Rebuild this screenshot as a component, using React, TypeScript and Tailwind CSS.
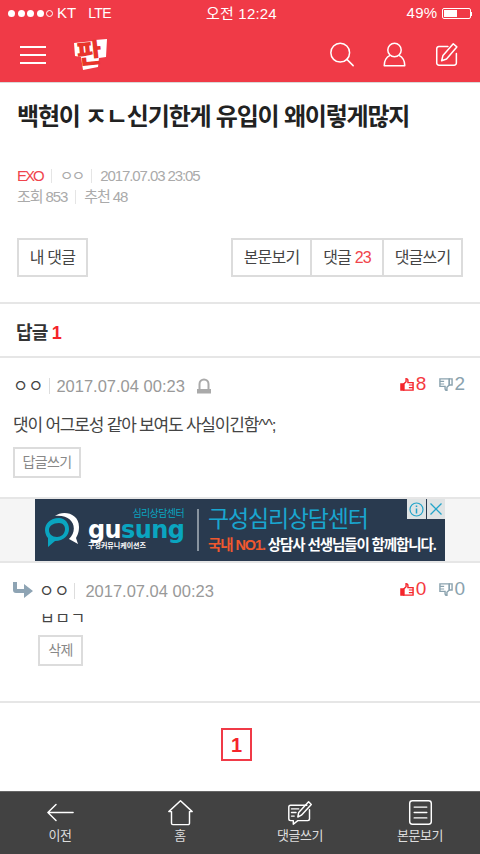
const font = "font-['Liberation_Sans','Noto_Sans_CJK_KR',sans-serif]";

function ThumbUp() {
  return (
    <svg width="14" height="15" viewBox="0 0 15 15" fill="none" stroke="#f5252b" strokeWidth="1.500">
      <path d="M1 7h3v6.500H1z" fill="#f5252b" />
      <path d="M4 7l2.500-2.500V1.200c1.400 0 2 .8 2 2V5.500H14V13.500H4z" />
      <path d="M9.500 8h4.500M9.500 10.800h4.500" strokeWidth="1.200" />
    </svg>
  );
}

function ThumbDown() {
  return (
    <svg width="14" height="15" viewBox="0 0 15 15" fill="none" stroke="#8aa2ae" strokeWidth="1.500">
      <path d="M14 8h-3V1.500h3z" />
      <path d="M11 8l-2.500 2.500v3.300c-1.400 0-2-.8-2-2V9.500H1V1.500h10z" />
      <path d="M5.500 7H1M5.500 4.200H1" strokeWidth="1.200" />
    </svg>
  );
}

function Votes({ up, down }: { up: number; down: number }) {
  return (
    <div className="flex items-center text-[19px] leading-[20px]">
      <ThumbUp />
      <span className="ml-[2px] text-[#f5393f]">{up}</span>
      <span className="ml-[13px]"><ThumbDown /></span>
      <span className="ml-[1px] text-[#8aa2ae]">{down}</span>
    </div>
  );
}

function Logo() {
  return (
    <div className="relative ml-[28px] h-[32px] w-[34px]">
      <svg width="34" height="32" viewBox="0 0 34 32" className="absolute inset-0">
        <path d="M0 4l20-2 1-1 12-1-1 18-7 1-1 9-15 3-2-13-6-1z" fill="#fff" />
      </svg>
      <span className="absolute left-[3px] top-[-1px] text-[27px] font-black leading-[32px] text-[#e8342a] rotate-[-6deg]">판</span>
    </div>
  );
}

function TabIcon({ children }: { children: React.ReactNode }) {
  return (
    <svg width="27" height="27" viewBox="0 0 30 30" fill="none" stroke="#fff" strokeWidth="1.600" strokeLinecap="round" strokeLinejoin="round">
      {children}
    </svg>
  );
}

const tabs = [
  { label: "이전", icon: <path d="M1 15h28M1 15l9-9M1 15l9 9" /> },
  { label: "홈", icon: <path d="M2 14L15 2l13 12h-3v13a1.500 1.500 0 0 1-1.500 1.500h-17A1.500 1.500 0 0 1 5 27V14z" /> },
  {
    label: "댓글쓰기",
    icon: (
      <>
        <path d="M22 7H4a2 2 0 0 0-2 2v13a2 2 0 0 0 2 2h3v4l5-4h11a2 2 0 0 0 2-2V12" />
        <path d="M5 11h8M5 15h5M5 19h3" />
        <path d="M12 20l1-5L24 3l3 3-11 12z" />
      </>
    ),
  },
  {
    label: "본문보기",
    icon: (
      <>
        <rect x="3" y="2" width="24" height="26" rx="3" />
        <path d="M8 9h14M8 15h14M8 21h14" />
      </>
    ),
  },
];

export default function App() {
  return (
    <div className={`${font} flex h-[854px] w-[480px] flex-col overflow-hidden bg-white`}>
      {/* Status bar + header */}
      <div className="h-[83px] shrink-0 border-b border-[#d9d9d9] bg-[#f03a47] text-white">
        <div className="relative flex h-[27px] items-center px-[8px] text-[15px]">
          <div className="flex items-center gap-[2.500px]">
            {[0, 1, 2, 3].map((i) => (
              <span key={i} className="h-[7px] w-[7px] rounded-full bg-white" />
            ))}
            <span className="h-[7px] w-[7px] rounded-full border border-white" />
          </div>
          <span className="ml-[4px]">KT</span>
          <span className="ml-[12px] text-[14px] tracking-[-0.600px]">LTE</span>
          <span className="absolute left-[206px] top-[3px] text-[15px] tracking-[0.200px]">오전 12:24</span>
          <div className="ml-auto flex items-center">
            <span className="tracking-[0.300px]">49%</span>
            <div className="ml-[4px] flex h-[11px] w-[29px] items-center rounded-[2px] border border-white p-[1px]">
              <div className="h-full w-[13px] bg-white" />
            </div>
            <div className="h-[4px] w-[1.500px] bg-white" />
          </div>
        </div>
        <div className="flex h-[55px] items-center pl-[20px] pr-[20px]">
          <div className="flex w-[26px] flex-col gap-[6px]">
            <span className="h-[2px] bg-white" />
            <span className="h-[2px] bg-white" />
            <span className="h-[2px] bg-white" />
          </div>
          <Logo />
          <div className="ml-auto flex items-center gap-[27px]">
            <svg width="26" height="25" viewBox="0 0 28 28" fill="none" stroke="#fff" strokeWidth="1.700" strokeLinecap="round">
              <circle cx="12" cy="12" r="10.500" />
              <path d="M19.500 19.500l7 7" />
            </svg>
            <svg width="25" height="25" viewBox="0 0 26 28" fill="none" stroke="#fff" strokeWidth="1.700" strokeLinejoin="round">
              <circle cx="13" cy="9" r="7.500" />
              <path d="M8 15C4 17 1.500 20.500 1.500 26.500h23c0-6-2.500-9.500-6.500-11.500" />
            </svg>
            <svg width="26" height="25" viewBox="0 0 26 28" fill="none" stroke="#fff" strokeWidth="1.700" strokeLinejoin="round" strokeLinecap="round">
              <path d="M14 5H4a2.500 2.500 0 0 0-2.500 2.500v16A2.500 2.500 0 0 0 4 26h17a2.500 2.500 0 0 0 2.500-2.500V13" />
              <path d="M7 21l1.500-6L20 2l4 3.500L12.500 19z" />
            </svg>
          </div>
        </div>
      </div>

      {/* Title */}
      <h1 className="mt-[18px] whitespace-nowrap pl-[17px] text-[24px] font-bold leading-[32px] tracking-[-1.200px] text-[#222]">
        백현이 ㅈㄴ신기한게 유입이 왜이렇게많지
      </h1>

      {/* Meta */}
      <div className="mt-[32px] pl-[17px] text-[15px] leading-[21px] tracking-[-1.100px] text-[#aaa]">
        <div className="flex items-center">
          <span className="tracking-[-2px] text-[#f0444c]">EXO</span>
          <span className="mx-[8px] h-[14px] w-px bg-[#e5e5e5]" />
          <span className="tracking-[-2px]">ㅇㅇ</span>
          <span className="ml-[8px] mr-[8px] h-[14px] w-px bg-[#e5e5e5]" />
          <span>2017.07.03 23:05</span>
        </div>
        <div className="flex items-center">
          <span>조회 853</span>
          <span className="mx-[8px] h-[14px] w-px bg-[#e5e5e5]" />
          <span>추천 48</span>
        </div>
      </div>

      {/* Buttons */}
      <div className="mt-[31px] flex justify-between px-[17px] text-[16px] tracking-[-0.800px] text-[#444]">
        <div className="flex h-[39px] w-[71px] items-center justify-center border-2 border-[#dcdcdc]">내 댓글</div>
        <div className="flex h-[39px] border-2 border-[#dcdcdc]">
          <div className="flex w-[79px] items-center justify-center border-r-2 border-[#dcdcdc]">본문보기</div>
          <div className="flex w-[72px] items-center justify-center border-r-2 border-[#dcdcdc]">
            댓글&nbsp;<span className="text-[#f0444c]">23</span>
          </div>
          <div className="flex w-[77px] items-center justify-center">댓글쓰기</div>
        </div>
      </div>

      <div className="mt-[25px] h-[2px] bg-[#e6e6e6]" />

      {/* Reply heading */}
      <div className="flex h-[52px] items-center pl-[16px] pt-[7px] text-[18px] font-bold tracking-[-0.800px] text-[#333]">
        답글&nbsp;<span className="text-[#f5252b]">1</span>
      </div>
      <div className="h-[2px] bg-[#e6e6e6]" />

      {/* Comment */}
      <div className="pl-[13px] pr-[14px] pt-[18px]">
        <div className="flex items-start justify-between">
          <div className="flex items-center text-[16.500px] leading-[20px] text-[#999]">
            <span className="text-[#444]">ㅇㅇ</span>
            <span className="mx-[6px] h-[16px] w-px bg-[#ddd]" />
            <span>2017.07.04 00:23</span>
            <svg className="ml-[12px]" width="14" height="16" viewBox="0 0 14 16" fill="#aaa">
              <path fillRule="evenodd" d="M1.500 11V6a5.500 5.500 0 0 1 11 0v5h1.500v4.500H0V11zm2 0h7V6a3.500 3.500 0 0 0-7 0z" />
            </svg>
          </div>
          <div className="-mt-[2px] pr-[1px]">
            <Votes up={8} down={2} />
          </div>
        </div>
        <p className="mt-[18px] text-[17px] leading-[24px] tracking-[-1.200px] text-[#444]">댓이 어그로성 같아 보여도 사실이긴함^^;</p>
        <div className="mt-[9px] flex h-[31px] w-[68px] items-center justify-center border-2 border-[#dcdcdc] text-[14px] tracking-[-0.600px] text-[#888]">
          답글쓰기
        </div>
      </div>

      {/* Ad */}
      <div className="mt-[19px] flex h-[66px] justify-center border-y-2 border-[#e6e6e6] bg-[#f5f5f5]">
        <div className="relative flex h-full w-[410px] items-center bg-[#293a4f] pl-[8px]">
          <svg width="38" height="38" viewBox="0 0 38 38" fill="none">
            <path d="M12 5c8-6 24-3 24 11 0 6-2 9-3 11l2 6-9-5C36 18 30 3 12 5z" fill="#fff" />
            <path d="M16 7C7 7 2 13 2 19c0 4 2 7 3 8v9l7-6c9 0 14-6 14-12 0-6-4-11-10-11zm0 5c4 0 6 3 6 6 0 5-4 8-8 8-5 0-8-3-8-7 0-4 4-7 10-7z" fill="#0aa5c0" />
          </svg>
          <div className="ml-[7px] flex w-[96px] flex-col items-end">
            <span className="text-[10px] leading-[10px] tracking-[-0.600px] text-[#0aa5c0]">심리상담센터</span>
            <span className="self-start font-['DejaVu_Sans',sans-serif] text-[24px] font-bold leading-[22px] tracking-[-0.600px] text-white">
              gu<span className="text-[#0aa5c0]">sung</span>
            </span>
            <span className="self-start text-[7px] font-bold leading-[10px] text-white">구성커뮤니케이션즈</span>
          </div>
          <span className="ml-[13px] h-[42px] w-[2px] bg-[#8894a0]" />
          <div className="ml-[9px] flex flex-col">
            <span className="text-[23px] leading-[29px] tracking-[-1.200px] text-[#19a6d0]">구성심리상담센터</span>
            <span className="mt-[1px] whitespace-nowrap text-[14.500px] font-bold leading-[20px] tracking-[-1.100px] text-white">
              <span className="text-[#f0582e]">국내 NO1.</span> 상담사 선생님들이 함께합니다.
            </span>
          </div>
          <div className="absolute right-0 top-0 flex h-[20px] gap-px">
            <div className="flex w-[19px] items-center justify-center bg-[#dfe3e4]">
              <svg width="15" height="15" viewBox="0 0 15 15" fill="none" stroke="#23a4c9" strokeWidth="1.200">
                <circle cx="7.500" cy="7.500" r="6.500" />
                <path d="M7.500 6.500v5M7.500 3.500v1.500" strokeWidth="1.500" />
              </svg>
            </div>
            <div className="flex w-[18px] items-center justify-center bg-[#dfe3e4]">
              <svg width="14" height="14" viewBox="0 0 14 14" stroke="#23a4c9" strokeWidth="1.300">
                <path d="M1.500 1.500l11 11M12.500 1.500l-11 11" />
              </svg>
            </div>
          </div>
        </div>
      </div>

      {/* Nested reply */}
      <div className="pl-[13px] pr-[14px] pt-[18px]">
        <div className="flex items-start justify-between">
          <div className="flex items-center text-[16.500px] leading-[20px] text-[#999]">
            <svg className="-mt-[1px]" width="20" height="17" viewBox="0 0 20 17" fill="#8ea4b4">
              <path d="M0 0h4v7h7V2l9 7-9 7v-5H3a3 3 0 0 1-3-3z" />
            </svg>
            <span className="ml-[6px] text-[#444]">ㅇㅇ</span>
            <span className="ml-[5px] mr-[10px] h-[16px] w-px bg-[#ddd]" />
            <span>2017.07.04 00:23</span>
          </div>
          <div className="-mt-[2px] pr-[1px]">
            <Votes up={0} down={0} />
          </div>
        </div>
        <div className="mt-[12px] h-[13px] overflow-hidden pl-[27px]">
          <p className="-mt-[3px] text-[16px] leading-[17px] tracking-[0.500px] text-[#444]">ㅂㅁㄱ</p>
        </div>
        <div className="ml-[25px] mt-[9px] flex h-[31px] w-[45px] items-center justify-center border-2 border-[#dcdcdc] text-[14px] tracking-[-0.600px] text-[#888]">
          삭제
        </div>
      </div>

      <div className="mt-[35px] h-[2px] bg-[#e6e6e6]" />

      {/* Pagination */}
      <div className="flex flex-1 items-center justify-center pb-[5px] pr-[7px]">
        <div className="flex h-[33px] w-[31px] items-center justify-center border-2 border-[#f03a47] text-[20px] font-bold text-[#f5252b]">1</div>
      </div>

      {/* Bottom bar */}
      <div className="grid h-[63px] shrink-0 grid-cols-4 border-t border-[#666] bg-[#424242]">
        {tabs.map((t) => (
          <div key={t.label} className="flex flex-col items-center pt-[7px]">
            <TabIcon>{t.icon}</TabIcon>
            <span className="mt-[1px] text-[13px] leading-[18px] tracking-[-0.500px] text-[#ddd]">{t.label}</span>
          </div>
        ))}
      </div>
    </div>
  );
}
